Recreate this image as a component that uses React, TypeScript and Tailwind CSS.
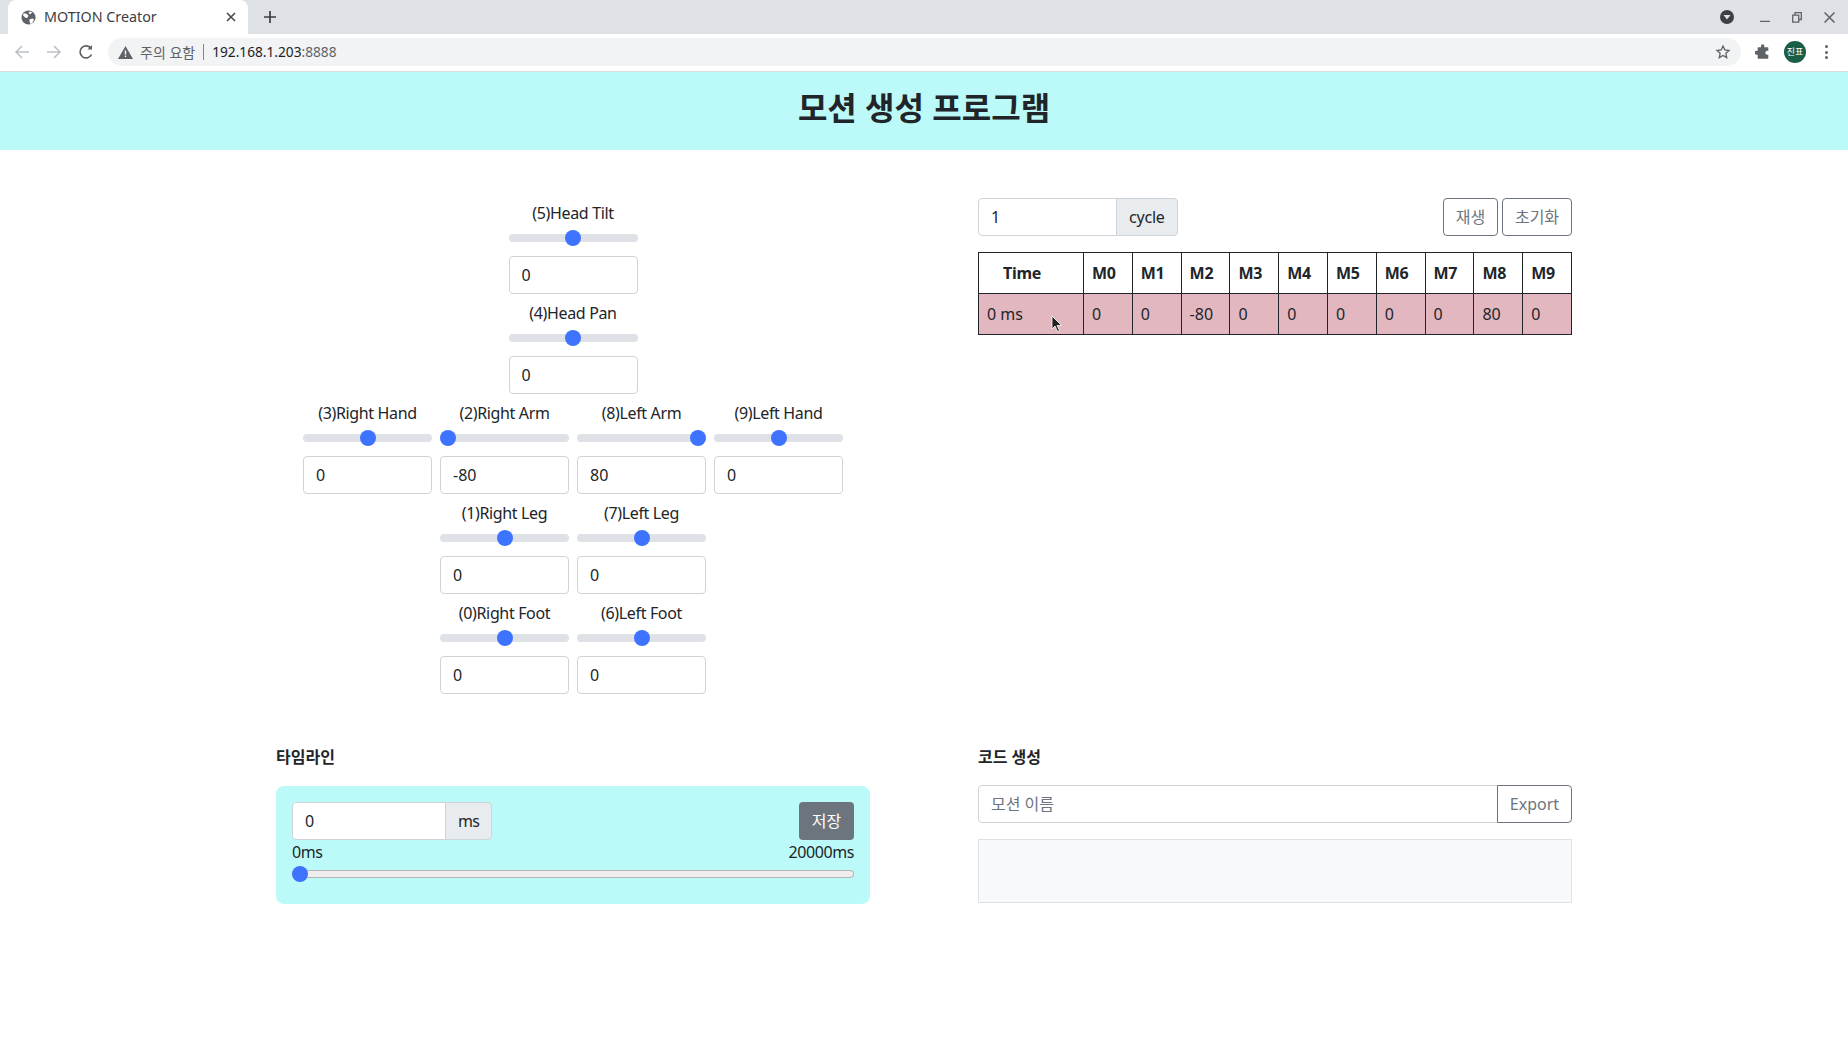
import React from "react";

const fontCls = "font-['Noto_Sans','Noto_Sans_CJK_KR',sans-serif]";

function Range({ value, min = -80, max = 80 }: { value: number; min?: number; max?: number }) {
  return (
    <input
      type="range"
      min={min}
      max={max}
      defaultValue={value}
      className="block h-6 w-full cursor-pointer appearance-none bg-transparent outline-none [&::-webkit-slider-runnable-track]:h-2 [&::-webkit-slider-runnable-track]:rounded-full [&::-webkit-slider-runnable-track]:bg-[#dee2e6] [&::-webkit-slider-thumb]:-mt-1 [&::-webkit-slider-thumb]:h-4 [&::-webkit-slider-thumb]:w-4 [&::-webkit-slider-thumb]:appearance-none [&::-webkit-slider-thumb]:rounded-full [&::-webkit-slider-thumb]:bg-[#3d73ff]"
    />
  );
}

function Joint({ label, value }: { label: string; value: number }) {
  return (
    <div className="w-[129px]">
      <div className="h-6 whitespace-nowrap text-center leading-[22px] tracking-[-0.35px]">{label}</div>
      <Range value={value} />
      <input
        defaultValue={String(value)}
        className="mt-[6px] mb-2 block h-[38px] w-full rounded border border-[#ced4da] bg-white px-3 outline-none"
      />
    </div>
  );
}

function Row({ items }: { items: [string, number][] }) {
  return (
    <div className="flex justify-center gap-2">
      {items.map(([l, v]) => (
        <Joint key={l} label={l} value={v} />
      ))}
    </div>
  );
}

function TabStrip() {
  return (
    <div className="flex h-[34px] items-end bg-[#dee1e6] pl-2 text-[#3c4043]">
      <div className="flex h-[34px] w-[240px] items-center rounded-t-lg bg-white pl-[13px] pr-[12px]">
        <svg width="15" height="15" viewBox="0 0 16 16" className="shrink-0">
          <circle cx="8" cy="8" r="7.5" fill="#5f6368" />
          <path d="M3 3.5l3 .5 2 2-1 2-2 .5-3-3zM9 10l3-1 2 1-2 4-2 1-1-3zM9 1.500l3 1-2 2-2-1z" fill="#fff" />
        </svg>
        <span className="ml-[8px] flex-1 whitespace-nowrap text-[14.300px]">MOTION Creator</span>
        <svg width="10" height="10" viewBox="0 0 10 10" className="shrink-0" stroke="#45484c" strokeWidth="1.600">
          <path d="M1 1l8 8M9 1l-8 8" />
        </svg>
      </div>
      <div className="flex h-[34px] w-[44px] items-center justify-center">
        <svg width="12" height="12" viewBox="0 0 12 12" stroke="#3c4043" strokeWidth="1.700">
          <path d="M6 0v12M0 6h12" />
        </svg>
      </div>
      <div className="flex-1" />
      <div className="flex h-[34px] items-center">
        <svg width="14" height="14" viewBox="0 0 14 14" className="mr-[26px]">
          <circle cx="7" cy="7" r="7" fill="#3c4043" />
          <path d="M3.500 5h7L7 9.500z" fill="#dee1e6" />
        </svg>
        <svg width="10" height="10" viewBox="0 0 10 10" className="mr-[22px]" stroke="#5f6368" strokeWidth="1.500">
          <path d="M0 9.500h10" />
        </svg>
        <svg width="10" height="11" viewBox="0 0 10 11" className="mr-[22px]" fill="none" stroke="#5f6368" strokeWidth="1.300">
          <path d="M.7 3.200h6v7h-6zM3 3V.7h6.300v6.800H7" />
        </svg>
        <svg width="11" height="11" viewBox="0 0 11 11" className="mr-[13px]" stroke="#5f6368" strokeWidth="1.500">
          <path d="M.5.500l10 10M10.500.500l-10 10" />
        </svg>
      </div>
    </div>
  );
}

function Toolbar() {
  return (
    <div className="flex h-[37px] items-center bg-white pb-px">
      <svg width="16" height="16" viewBox="0 0 16 16" className="ml-[14px]" fill="none" stroke="#bdc1c6" strokeWidth="1.600">
        <path d="M15 8H2M8 2L2 8l6 6" />
      </svg>
      <svg width="16" height="16" viewBox="0 0 16 16" className="ml-[16px]" fill="none" stroke="#bdc1c6" strokeWidth="1.600">
        <path d="M1 8h13M8 2l6 6-6 6" />
      </svg>
      <svg width="16" height="16" viewBox="0 0 16 16" className="ml-[16px]" fill="none" stroke="#5f6368" strokeWidth="1.700">
        <path d="M13.500 10.500A6 6 0 1 1 13 4.500" />
        <path d="M14 1v4.500H9.500z" fill="#5f6368" stroke="none" />
      </svg>
      <div className="ml-[14px] flex h-[28px] flex-1 items-center rounded-full bg-[#f1f3f4] pl-[10px]">
        <svg width="15" height="13" viewBox="0 0 15 13">
          <path d="M7.500 0L15 13H0z" fill="#5f6368" />
          <path d="M6.800 4.500h1.400v4H6.800zM6.800 9.500h1.400v1.400H6.800z" fill="#fff" />
        </svg>
        <span className="ml-[7px] text-[14px] text-[#5f6368]">주의 요함</span>
        <span className="mx-[8px] h-[16px] w-px bg-[#80868b]" />
        <span className="text-[13.700px] text-[#202124]">
          192.168.1.203<span className="text-[#5f6368]">:8888</span>
        </span>
        <div className="flex-1" />
        <svg width="16" height="16" viewBox="0 0 24 24" className="mr-[10px]" fill="none" stroke="#5f6368" strokeWidth="2">
          <path d="M12 3l2.700 6 6.300.700-4.700 4.300 1.300 6.500L12 17.200 6.400 20.500 7.700 14 3 9.700 9.300 9z" />
        </svg>
      </div>
      <svg width="16" height="16" viewBox="0 0 24 24" className="ml-[14px]" fill="#5f6368">
        <path d="M9 3a2.500 2.500 0 0 1 5 0v2h5a1 1 0 0 1 1 1v4h-1.500a3 3 0 0 0 0 6H20v5a1 1 0 0 1-1 1H5a1 1 0 0 1-1-1v-5H2.500a3 3 0 0 1 0-6H4V6a1 1 0 0 1 1-1h4z" />
      </svg>
      <div className="ml-[13px] flex h-[22px] w-[22px] items-center justify-center rounded-full bg-[#1b5e47] text-[9px] text-white">
        진표
      </div>
      <div className="ml-[19px] mr-[20px] flex flex-col gap-[2.500px]">
        <span className="h-[3px] w-[3px] rounded-full bg-[#5f6368]" />
        <span className="h-[3px] w-[3px] rounded-full bg-[#5f6368]" />
        <span className="h-[3px] w-[3px] rounded-full bg-[#5f6368]" />
      </div>
    </div>
  );
}

const heads = ["M0", "M1", "M2", "M3", "M4", "M5", "M6", "M7", "M8", "M9"];
const vals = [0, 0, -80, 0, 0, 0, 0, 0, 80, 0];

function MotionTable() {
  return (
    <table className="mt-4 w-[594px] table-fixed border-collapse text-left">
      <colgroup>
        <col className="w-[105px]" />
        {heads.map((h) => (
          <col key={h} />
        ))}
      </colgroup>
      <thead>
        <tr className="h-[41px]">
          <th className="border border-[#212529] pl-6 font-bold tracking-[-0.3px]">Time</th>
          {heads.map((h) => (
            <th key={h} className="border border-[#212529] px-2 font-bold tracking-[-0.3px]">
              {h}
            </th>
          ))}
        </tr>
      </thead>
      <tbody>
        <tr className="h-[41px] bg-[#e3b7bf]">
          <td className="border border-[#212529] px-2">0 ms</td>
          {vals.map((v, i) => (
            <td key={i} className="border border-[#212529] px-2">
              {v}
            </td>
          ))}
        </tr>
      </tbody>
    </table>
  );
}

export default function App() {
  return (
    <div className={`relative min-h-[1053px] bg-white text-base text-[#212529] ${fontCls}`}>
      <TabStrip />
      <Toolbar />
      <header className="flex h-[79px] items-center justify-center border-t border-[#dadce0] bg-[#bbfaf8] pb-[7px]">
        <h1 className="text-[32px] font-bold leading-none">모션 생성 프로그램</h1>
      </header>

      <main className="mx-auto w-[1296px]">
        <div className="mt-[48px] flex justify-between">
          <section className="w-[594px] pt-1">
            <Row items={[["(5)Head Tilt", 0]]} />
            <Row items={[["(4)Head Pan", 0]]} />
            <Row
              items={[
                ["(3)Right Hand", 0],
                ["(2)Right Arm", -80],
                ["(8)Left Arm", 80],
                ["(9)Left Hand", 0],
              ]}
            />
            <Row
              items={[
                ["(1)Right Leg", 0],
                ["(7)Left Leg", 0],
              ]}
            />
            <Row
              items={[
                ["(0)Right Foot", 0],
                ["(6)Left Foot", 0],
              ]}
            />
          </section>

          <section className="w-[594px]">
            <div className="flex items-center justify-between">
              <div className="flex h-[38px]">
                <input
                  defaultValue="1"
                  className="w-[139px] rounded-l border border-[#ced4da] bg-white px-3 outline-none"
                />
                <span className="-ml-px flex items-center rounded-r border border-[#ced4da] bg-[#e9ecef] px-3 tracking-[-0.2px]">
                  cycle
                </span>
              </div>
              <div className="flex gap-1">
                <button className="h-[38px] w-[55px] rounded border border-[#6c757d] text-[#6c757d]">재생</button>
                <button className="h-[38px] w-[70px] rounded border border-[#6c757d] text-[#6c757d]">초기화</button>
              </div>
            </div>
            <MotionTable />
          </section>
        </div>

        <div className="mt-[43px] flex justify-between">
          <section className="w-[594px]">
            <h2 className="mb-[17px] h-6 font-bold leading-6">타임라인</h2>
            <div className="h-[118px] rounded-lg bg-[#bbfaf8] p-4">
              <div className="flex items-start justify-between">
                <div className="flex h-[38px]">
                  <input
                    defaultValue="0"
                    className="w-[154px] rounded-l border border-[#ced4da] bg-white px-3 outline-none"
                  />
                  <span className="-ml-px flex items-center rounded-r border border-[#ced4da] bg-[#e9ecef] px-3 tracking-[-0.8px]">
                    ms
                  </span>
                </div>
                <button className="h-[38px] w-[55px] rounded bg-[#6c757d] text-white">저장</button>
              </div>
              <div className="flex justify-between leading-6 tracking-[-0.4px]">
                <span>0ms</span>
                <span>20000ms</span>
              </div>
              <input
                type="range"
                min={0}
                max={20000}
                defaultValue={0}
                className="mt-[2px] block h-4 w-full cursor-pointer appearance-none bg-transparent outline-none [&::-webkit-slider-runnable-track]:h-2 [&::-webkit-slider-runnable-track]:rounded-full [&::-webkit-slider-runnable-track]:bg-[#efeded] [&::-webkit-slider-runnable-track]:shadow-[inset_0_0_0_1px_#b5b5b5] [&::-webkit-slider-thumb]:-mt-1 [&::-webkit-slider-thumb]:h-4 [&::-webkit-slider-thumb]:w-4 [&::-webkit-slider-thumb]:appearance-none [&::-webkit-slider-thumb]:rounded-full [&::-webkit-slider-thumb]:bg-[#3d73ff]"
              />
            </div>
          </section>

          <section className="w-[594px]">
            <h2 className="mb-4 h-6 font-bold leading-6">코드 생성</h2>
            <div className="flex h-[38px]">
              <input
                placeholder="모션 이름"
                className="flex-1 rounded-l border border-[#ced4da] bg-white px-3 outline-none placeholder:text-[#6c757d]"
              />
              <button className="-ml-px w-[75px] rounded-r border border-[#6c757d] text-[#6c757d]">Export</button>
            </div>
            <div className="mt-4 h-[64px] border border-[#dee2e6] bg-[#f8f9fa]" />
          </section>
        </div>
      </main>

      <svg width="12" height="18" viewBox="0 0 12 18" className="absolute left-[1051px] top-[315px]">
        <path d="M1 1v13l3-3 2.500 5.500 2-1L6 10.500h4.500z" fill="#222" stroke="#fff" strokeWidth="0.800" />
      </svg>
    </div>
  );
}
